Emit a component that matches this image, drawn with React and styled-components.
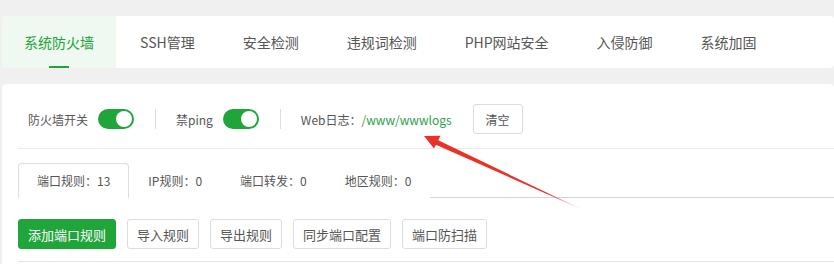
import React, { useState } from 'react';
import styled, { createGlobalStyle } from 'styled-components';

const GlobalStyle = createGlobalStyle`
  body {
    margin: 0;
    background: #f0f0f0;
    font-family: "Noto Sans CJK SC", "Noto Sans", sans-serif;
    color: #555;
  }
`

const mainTabs = ['系统防火墙', 'SSH管理', '安全检测', '违规词检测', 'PHP网站安全', '入侵防御', '系统加固']
const ruleTabs = ['端口规则：13', 'IP规则：0', '端口转发：0', '地区规则：0']
const actions = ['添加端口规则', '导入规则', '导出规则', '同步端口配置', '端口防扫描']

const App = () => {
    const [active, setActive] = useState(0)
    const [ruleTab, setRuleTab] = useState(0)
    const [firewall, setFirewall] = useState(true)
    const [ping, setPing] = useState(true)

    return (
        <Page>
            <GlobalStyle />
            <TopCard>
                {mainTabs.map((t, i) => (
                    <TopTab key={t} $active={i === active} onClick={() => setActive(i)}>{t}</TopTab>
                ))}
            </TopCard>

            <MainCard>
                <SwitchRow>
                    <Label>防火墙开关</Label>
                    <Toggle $on={firewall} onClick={() => setFirewall(!firewall)} />
                    <Divider />
                    <Label>禁ping</Label>
                    <Toggle $on={ping} onClick={() => setPing(!ping)} />
                    <Divider />
                    <Label>Web日志：<PathLink>/www/wwwlogs</PathLink></Label>
                    <ClearButton>清空</ClearButton>
                </SwitchRow>

                <RuleTabs>
                    {ruleTabs.map((t, i) => (
                        <RuleTab key={t} $active={i === ruleTab} onClick={() => setRuleTab(i)}>{t}</RuleTab>
                    ))}
                </RuleTabs>

                <ActionBar>
                    {actions.map((a, i) => (
                        <Button key={a} $primary={i === 0}>{a}</Button>
                    ))}
                </ActionBar>
                <TableTop />
            </MainCard>

            <Arrow viewBox="0 0 834 264">
                <defs>
                    <linearGradient id="fade" gradientUnits="userSpaceOnUse" x1="436" y1="142" x2="583" y2="210">
                        <stop offset="0" stopColor="#e8332a" />
                        <stop offset="0.75" stopColor="#e8332a" />
                        <stop offset="1" stopColor="#e8332a" stopOpacity="0.2" />
                    </linearGradient>
                </defs>
                <polygon points="434.8,144.2 437.2,139.8 583,210" fill="url(#fade)" />
                <polygon points="424,136 440.5,135.8 434,148.6" fill="#e8332a" />
            </Arrow>
        </Page>
    );
}

export default App;


const Page = styled.div`
    position: relative;
    padding: 16px 0 0 2px;
    height: 248px;
    overflow: hidden;
`
const TopCard = styled.div`
    display: flex;
    height: 52px;
    background: #fff;
    border-radius: 4px;
    overflow: hidden;
`
const TopTab = styled.div`
    position: relative;
    padding: 0 24px;
    line-height: 52px;
    font-size: 14px;
    cursor: pointer;
    color: ${p => p.$active ? '#20a53a' : '#555'};
    background: ${p => p.$active ? '#eff8f1' : 'transparent'};
    &:first-child {
        padding: 0 22px;
    }
    &::after {
        content: '';
        display: ${p => p.$active ? 'block' : 'none'};
        position: absolute;
        left: 50%;
        bottom: 0;
        width: 20px;
        margin-left: -10px;
        height: 2px;
        background: #20a53a;
    }
`
const MainCard = styled.div`
    margin-top: 16px;
    background: #fff;
    border-radius: 4px;
    padding: 0 0 20px 16px;
`
const SwitchRow = styled.div`
    display: flex;
    align-items: center;
    height: 30px;
    padding: 20px 0 14px 10px;
    border-bottom: 1px solid #ebebeb;
    font-size: 12px;
`
const Label = styled.span`
    color: #555;
    white-space: nowrap;
`
const PathLink = styled.span`
    color: #2f9e4c;
`
const Toggle = styled.span`
    position: relative;
    width: 36px;
    height: 20px;
    border-radius: 10px;
    margin-left: 10px;
    background: ${p => p.$on ? '#20a53a' : '#ccc'};
    cursor: pointer;
    &::after {
        content: '';
        position: absolute;
        top: 2px;
        left: ${p => p.$on ? '18px' : '2px'};
        width: 16px;
        height: 16px;
        border-radius: 50%;
        background: #fff;
    }
`
const Divider = styled.span`
    width: 1px;
    height: 20px;
    background: #ddd;
    margin: 0 20px 0 21px;
`
const RuleTabs = styled.div`
    display: flex;
    margin-top: 14px;
    border-bottom: 1px solid #d4d4dc;
`
const RuleTab = styled.div`
    height: 33px;
    line-height: 33px;
    padding: 0 18px;
    font-size: 12px;
    color: #555;
    cursor: pointer;
    border: 1px solid ${p => p.$active ? '#dcdce2' : 'transparent'};
    border-bottom: none;
    border-radius: 4px 4px 0 0;
    background: #fff;
    margin-bottom: -1px;
    padding-bottom: 1px;
`
const ActionBar = styled.div`
    display: flex;
    gap: 11px;
    margin-top: 21px;
`
const Button = styled.button`
    height: 30px;
    padding: 0 9px;
    font-family: inherit;
    font-size: 13px;
    border-radius: 3px;
    cursor: pointer;
    white-space: nowrap;
    color: ${p => p.$primary ? '#fff' : '#555'};
    background: ${p => p.$primary ? '#20a53a' : '#fff'};
    border: 1px solid ${p => p.$primary ? '#20a53a' : '#ddd'};
`
const ClearButton = styled(Button)`
    margin-left: 21px;
    padding: 0 12px;
    font-size: 12px;
`
const TableTop = styled.div`
    margin-top: 12px;
    border-top: 1px solid #e4e4e4;
`
const Arrow = styled.svg`
    position: absolute;
    left: 0;
    top: 0;
    width: 834px;
    height: 264px;
    pointer-events: none;
`
